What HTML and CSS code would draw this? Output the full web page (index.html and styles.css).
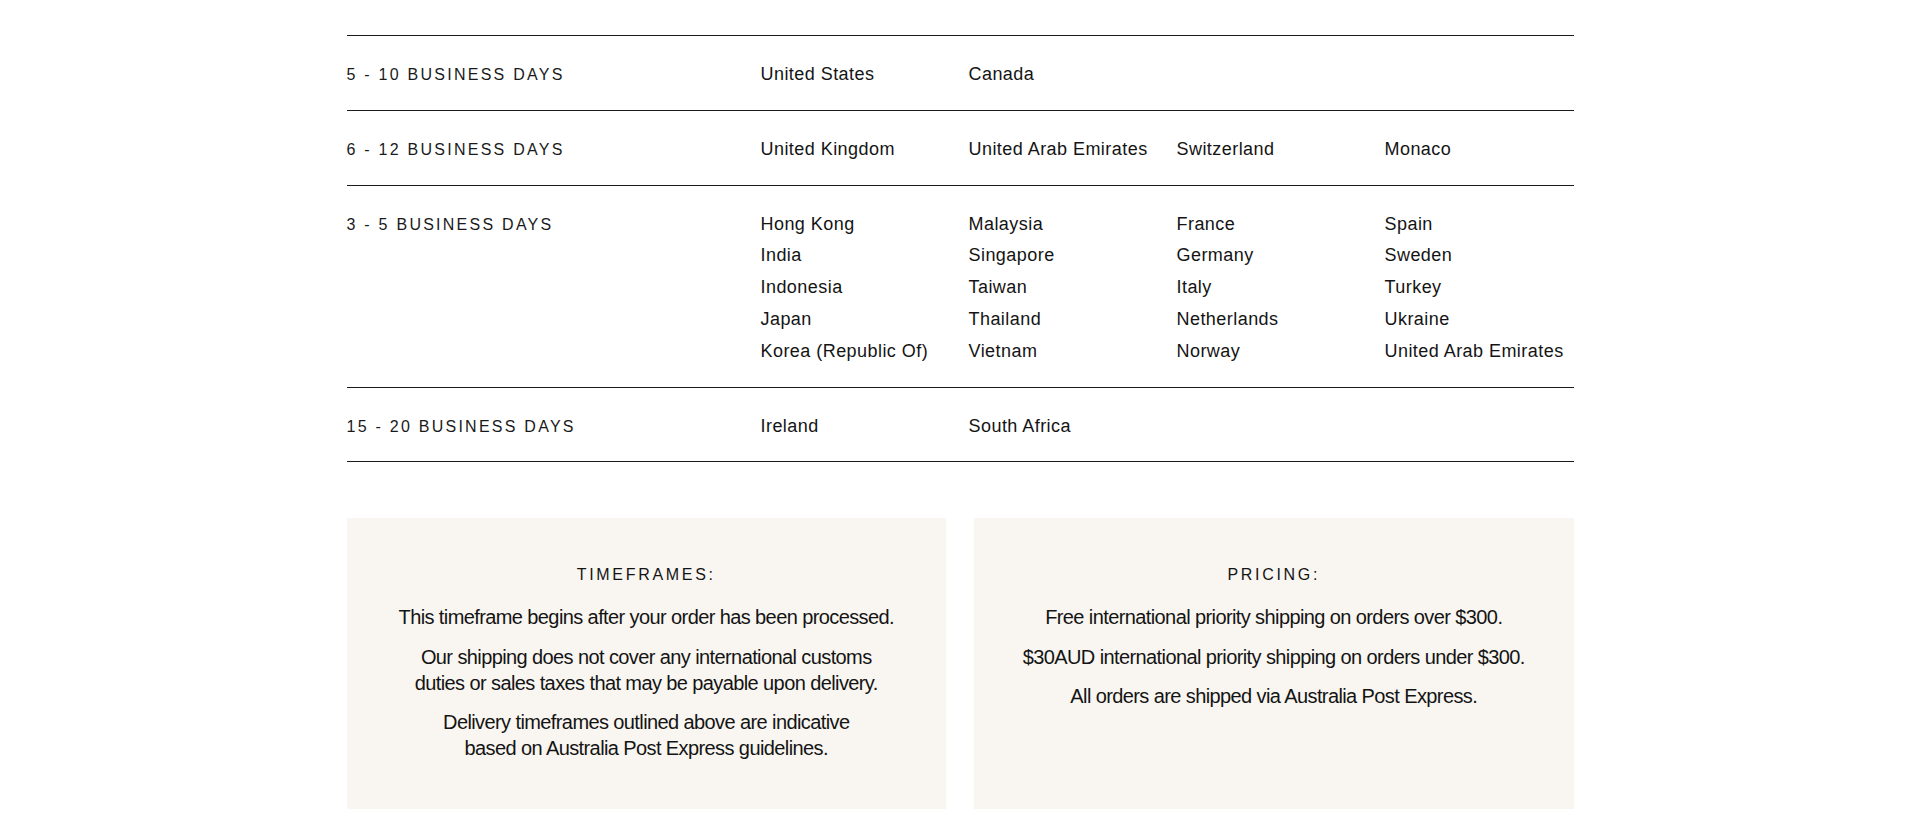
FILE: index.html
```html
<!DOCTYPE html>
<html lang="en">
<head>
<meta charset="utf-8">
<title>International Shipping</title>
<link rel="stylesheet" href="styles.css">
</head>
<body>
<main class="shipping">
  <section class="zones">
    <div class="zone">
      <div class="zone-label">5 - 10 BUSINESS DAYS</div>
      <ul class="zone-col"><li>United States</li></ul>
      <ul class="zone-col"><li>Canada</li></ul>
    </div>
    <div class="zone">
      <div class="zone-label">6 - 12 BUSINESS DAYS</div>
      <ul class="zone-col"><li>United Kingdom</li></ul>
      <ul class="zone-col"><li>United Arab Emirates</li></ul>
      <ul class="zone-col"><li>Switzerland</li></ul>
      <ul class="zone-col"><li>Monaco</li></ul>
    </div>
    <div class="zone">
      <div class="zone-label">3 - 5 BUSINESS DAYS</div>
      <ul class="zone-col">
        <li>Hong Kong</li><li>India</li><li>Indonesia</li><li>Japan</li><li>Korea (Republic Of)</li>
      </ul>
      <ul class="zone-col">
        <li>Malaysia</li><li>Singapore</li><li>Taiwan</li><li>Thailand</li><li>Vietnam</li>
      </ul>
      <ul class="zone-col">
        <li>France</li><li>Germany</li><li>Italy</li><li>Netherlands</li><li>Norway</li>
      </ul>
      <ul class="zone-col">
        <li>Spain</li><li>Sweden</li><li>Turkey</li><li>Ukraine</li><li>United Arab Emirates</li>
      </ul>
    </div>
    <div class="zone">
      <div class="zone-label">15 - 20 BUSINESS DAYS</div>
      <ul class="zone-col"><li>Ireland</li></ul>
      <ul class="zone-col"><li>South Africa</li></ul>
    </div>
  </section>

  <section class="info">
    <div class="info-card">
      <h3 class="info-title">TIMEFRAMES:</h3>
      <p>This timeframe begins after your order has been processed.</p>
      <p>Our shipping does not cover any international customs<br>duties or sales taxes that may be payable upon delivery.</p>
      <p>Delivery timeframes outlined above are indicative<br>based on Australia Post Express guidelines.</p>
    </div>
    <div class="info-card">
      <h3 class="info-title">PRICING:</h3>
      <p>Free international priority shipping on orders over $300.</p>
      <p>$30AUD international priority shipping on orders under $300.</p>
      <p>All orders are shipped via Australia Post Express.</p>
    </div>
  </section>
</main>
</body>
</html>
```

FILE: styles.css
```css
* {
  box-sizing: border-box;
}

html, body {
  margin: 0;
  padding: 0;
  background: #ffffff;
}

body {
  font-family: "Liberation Sans", Arial, sans-serif;
  color: #141414;
}

.shipping {
  width: 1227px;
  margin: 0 auto;
  padding-top: 35px;
}

.zones {
  border-top: 1px solid #1a1a1a;
}

.zone {
  display: grid;
  grid-template-columns: 414px repeat(3, 208px) 1fr;
  padding: 23px 0 19px;
  border-bottom: 1px solid #1a1a1a;
}

.zone-label {
  font-size: 16px;
  letter-spacing: 2.25px;
  line-height: 31.8px;
  color: #1a1a1a;
}

.zone-col {
  list-style: none;
  margin: 0;
  padding: 0;
  font-size: 18px;
  letter-spacing: 0.45px;
  line-height: 31.8px;
  white-space: nowrap;
}

.info {
  display: grid;
  grid-template-columns: 1fr 1fr;
  column-gap: 28px;
  margin-top: 56px;
}

.info-card {
  background: #f9f6f1;
  padding: 47px 24px 48px;
  text-align: center;
}

.info-title {
  margin: 0 0 19px;
  font-size: 16px;
  font-weight: 400;
  letter-spacing: 2.7px;
  line-height: 20px;
}

.info-card p {
  margin: 0 0 13.5px;
  font-size: 20px;
  letter-spacing: -0.6px;
  line-height: 26px;
}

.info-card p:last-child {
  margin-bottom: 0;
}
```
